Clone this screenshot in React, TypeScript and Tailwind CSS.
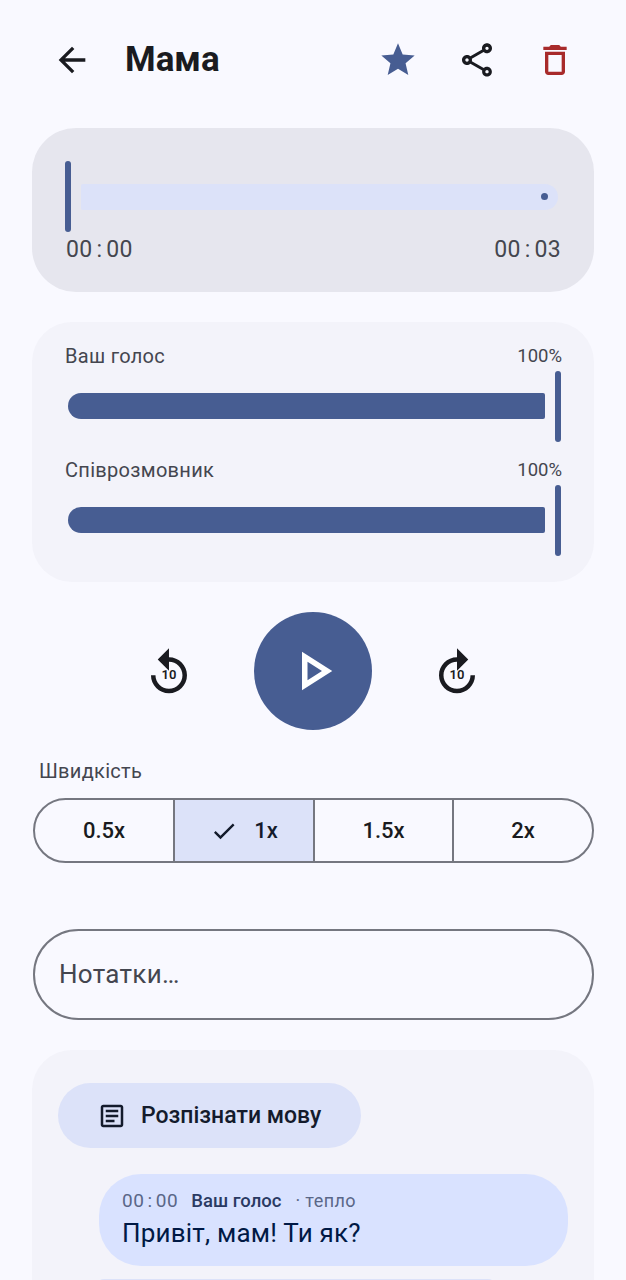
import React from "react";

const P = {
  back: "M20 11H7.83l5.59-5.59L12 4l-8 8 8 8 1.41-1.41L7.83 13H20v-2z",
  star: "M12 17.27L18.18 21l-1.64-7.03L22 9.24l-7.19-.61L12 2 9.19 8.63 2 9.24l5.46 4.73L5.82 21z",
  share:
    "M18 16.08c-.76 0-1.44.3-1.96.77L8.91 12.7c.05-.23.09-.46.09-.7s-.04-.47-.09-.7l7.05-4.11c.54.5 1.25.81 2.04.81 1.66 0 3-1.34 3-3s-1.34-3-3-3-3 1.34-3 3c0 .24.04.47.09.7L8.04 9.81C7.5 9.31 6.79 9 6 9c-1.66 0-3 1.34-3 3s1.34 3 3 3c.79 0 1.5-.31 2.04-.81l7.12 4.16c-.05.21-.08.43-.08.65 0 1.61 1.31 2.92 2.92 2.92s2.92-1.31 2.92-2.92c0-1.61-1.31-2.92-2.92-2.92zM18 4c.55 0 1 .45 1 1s-.45 1-1 1-1-.45-1-1 .45-1 1-1zM6 13c-.55 0-1-.45-1-1s.45-1 1-1 1 .45 1 1-.45 1-1 1zm12 7.02c-.55 0-1-.45-1-1s.45-1 1-1 1 .45 1 1-.45 1-1 1z",
  del: "M16 9v10H8V9h8m-1.5-6h-5l-1 1H5v2h14V4h-3.5l-1-1zM18 7H6v12c0 1.1.9 2 2 2h8c1.1 0 2-.9 2-2V7z",
  play: "M10 8.64L15.27 12 10 15.36V8.64M8 5v14l11-7L8 5z",
  replay: "M11.99 5V1l-5 5 5 5V7c3.31 0 6 2.69 6 6s-2.69 6-6 6-6-2.69-6-6h-2c0 4.42 3.58 8 8 8s8-3.58 8-8-3.58-8-8-8z",
  forward: "M18 13c0 3.31-2.69 6-6 6s-6-2.69-6-6 2.69-6 6-6v4l5-5-5-5v4c-4.42 0-8 3.58-8 8s3.58 8 8 8 8-3.58 8-8h-2z",
  check: "M9 16.17L4.83 12l-1.42 1.41L9 19 21 7l-1.41-1.41z",
  article:
    "M19 5v14H5V5h14m0-2H5c-1.1 0-2 .9-2 2v14c0 1.1.9 2 2 2h14c1.1 0 2-.9 2-2V5c0-1.1-.9-2-2-2z M14 17H7v-2h7v2zm3-4H7v-2h10v2zm0-4H7V7h10v2z",
};

function Icon({ d, className }: { d: string; className: string }) {
  return (
    <svg viewBox="0 0 24 24" fill="currentColor" className={className}>
      <path d={d} />
    </svg>
  );
}

function Skip({ d }: { d: string }) {
  return (
    <div className="relative mt-[4px] h-[54px] w-[54px] text-[#1a1b20]">
      <Icon d={d} className="h-[54px] w-[54px]" />
      <span className="absolute left-0 right-0 top-[20px] text-center text-[13px] font-semibold leading-[18px]">10</span>
    </div>
  );
}

function Time({ m, gap }: { m: string; gap: string }) {
  return (
    <span>
      00<span className={gap}>:</span>
      {m}
    </span>
  );
}

function Level({ label }: { label: string }) {
  return (
    <div>
      <div className="flex items-start justify-between text-[#44464f]">
        <span className="text-[20px] font-[450] leading-[24px] tracking-[0.3px]">{label}</span>
        <span className="text-[18.5px] leading-[24px]">100%</span>
      </div>
      <div className="mt-[3px] flex h-[71px] items-center pl-[3px]">
        <div className="mb-[1px] h-[26px] w-[477px] rounded-l-[13px] rounded-r-[2px] bg-[#475d92]" />
        <div className="ml-[10px] h-[71px] w-[6px] rounded-[3px] bg-[#475d92]" />
      </div>
    </div>
  );
}

export default function App() {
  return (
    <div className="h-[1280px] overflow-hidden bg-[#f9f9ff] font-['Roboto',sans-serif] text-[#1a1b20]">
      <header className="flex h-[128px] items-center pb-[8px] pl-[52px] pr-[51px]">
        <Icon d={P.back} className="h-[40px] w-[40px]" />
        <h1 className="ml-[33px] flex-1 text-[35px] font-bold leading-[40px]">Мама</h1>
        <Icon d={P.star} className="h-[40px] w-[40px] text-[#475d92]" />
        <Icon d={P.share} className="ml-[39px] h-[40px] w-[40px]" />
        <Icon d={P.del} className="ml-[38px] h-[40px] w-[40px] text-[#a82b2b]" />
      </header>

      <div className="px-[32px]">
        <section className="h-[164px] rounded-[44px] bg-[#e6e6ee] px-[33px] pt-[33px]">
          <div className="flex h-[71px] items-center">
            <div className="h-[71px] w-[6px] rounded-[3px] bg-[#475d92]" />
            <div className="ml-[10px] flex h-[26px] w-[477px] items-center justify-end rounded-r-[13px] rounded-l-[2px] bg-[#dce2f9] pr-[10px]">
              <div className="h-[7px] w-[7px] rounded-full bg-[#475d92]" />
            </div>
          </div>
          <div className="mt-[4px] flex justify-between pl-[1px] text-[23px] leading-[28px] tracking-[0.3px] text-[#44464f]">
            <Time m="00" gap="mx-[4px]" />
            <Time m="03" gap="mx-[4px]" />
          </div>
        </section>

        <section className="mt-[30px] h-[260px] rounded-[40px] bg-[#f3f3fa] pl-[33px] pr-[32px] pt-[22px]">
          <div className="flex flex-col gap-[16px]">
            <Level label="Ваш голос" />
            <Level label="Співрозмовник" />
          </div>
        </section>

        <div className="mt-[30px] flex items-center justify-center">
          <Skip d={P.replay} />
          <div className="mx-[58px] flex h-[118px] w-[118px] items-center justify-center rounded-full bg-[#475d92] text-white">
            <Icon d={P.play} className="h-[66px] w-[66px]" />
          </div>
          <Skip d={P.forward} />
        </div>

        <div className="ml-[7px] mt-[29px] text-[20px] font-[450] leading-[24px] tracking-[0.3px] text-[#44464f]">Швидкість</div>

        <div className="ml-[1px] mt-[15px] flex h-[65px] w-[561px] overflow-hidden rounded-[33px] border-2 border-[#757780] text-[22px] font-medium">
          <div className="flex w-[138px] items-center justify-center">0.5x</div>
          <div className="flex w-[142px] items-center justify-center gap-[16px] border-x-2 border-[#757780] bg-[#dce2f9] text-[#141b2c]">
            <Icon d={P.check} className="h-[28px] w-[28px]" />
            <span>1x</span>
          </div>
          <div className="flex w-[139px] items-center justify-center border-r-2 border-[#757780]">1.5x</div>
          <div className="flex flex-1 items-center justify-center">2x</div>
        </div>

        <div className="ml-[1px] mt-[66px] flex h-[91px] w-[561px] items-center rounded-[46px] border-2 border-[#757780] pl-[24px] text-[26px] tracking-[0.3px] text-[#44464f]">
          Нотатки…
        </div>

        <section className="mt-[30px] h-[400px] rounded-t-[40px] bg-[#f3f3fa] pl-[26px] pt-[33px]">
          <div className="flex h-[65px] w-[303px] items-center rounded-[33px] bg-[#dce2f9] pl-[39px] text-[#141b2c]">
            <Icon d={P.article} className="h-[30px] w-[30px]" />
            <span className="ml-[14px] text-[23px] font-medium leading-[28px]">Розпізнати мову</span>
          </div>
          <div className="ml-[41px] mt-[26px] h-[92px] w-[469px] rounded-[42px] bg-[#d9e2ff] pl-[23px] pt-[15px]">
            <div className="flex items-baseline text-[#5a6788]">
              <span className="text-[19px] leading-[24px] tracking-[0.6px]">
                <Time m="00" gap="mx-[3px]" />
              </span>
              <span className="ml-[13px] text-[18.5px] font-medium leading-[24px] text-[#2a3a63]">Ваш голос</span>
              <span className="ml-[14px] text-[18px] leading-[24px] tracking-[0.4px]">· тепло</span>
            </div>
            <div className="mt-[4px] text-[26px] leading-[32px] tracking-[0.2px] text-[#001945]">Привіт, мам! Ти як?</div>
          </div>
          <div className="ml-[38px] mt-[13px] h-[60px] w-[400px] rounded-[8px] bg-[#dce2f9]" />
        </section>
      </div>
    </div>
  );
}
